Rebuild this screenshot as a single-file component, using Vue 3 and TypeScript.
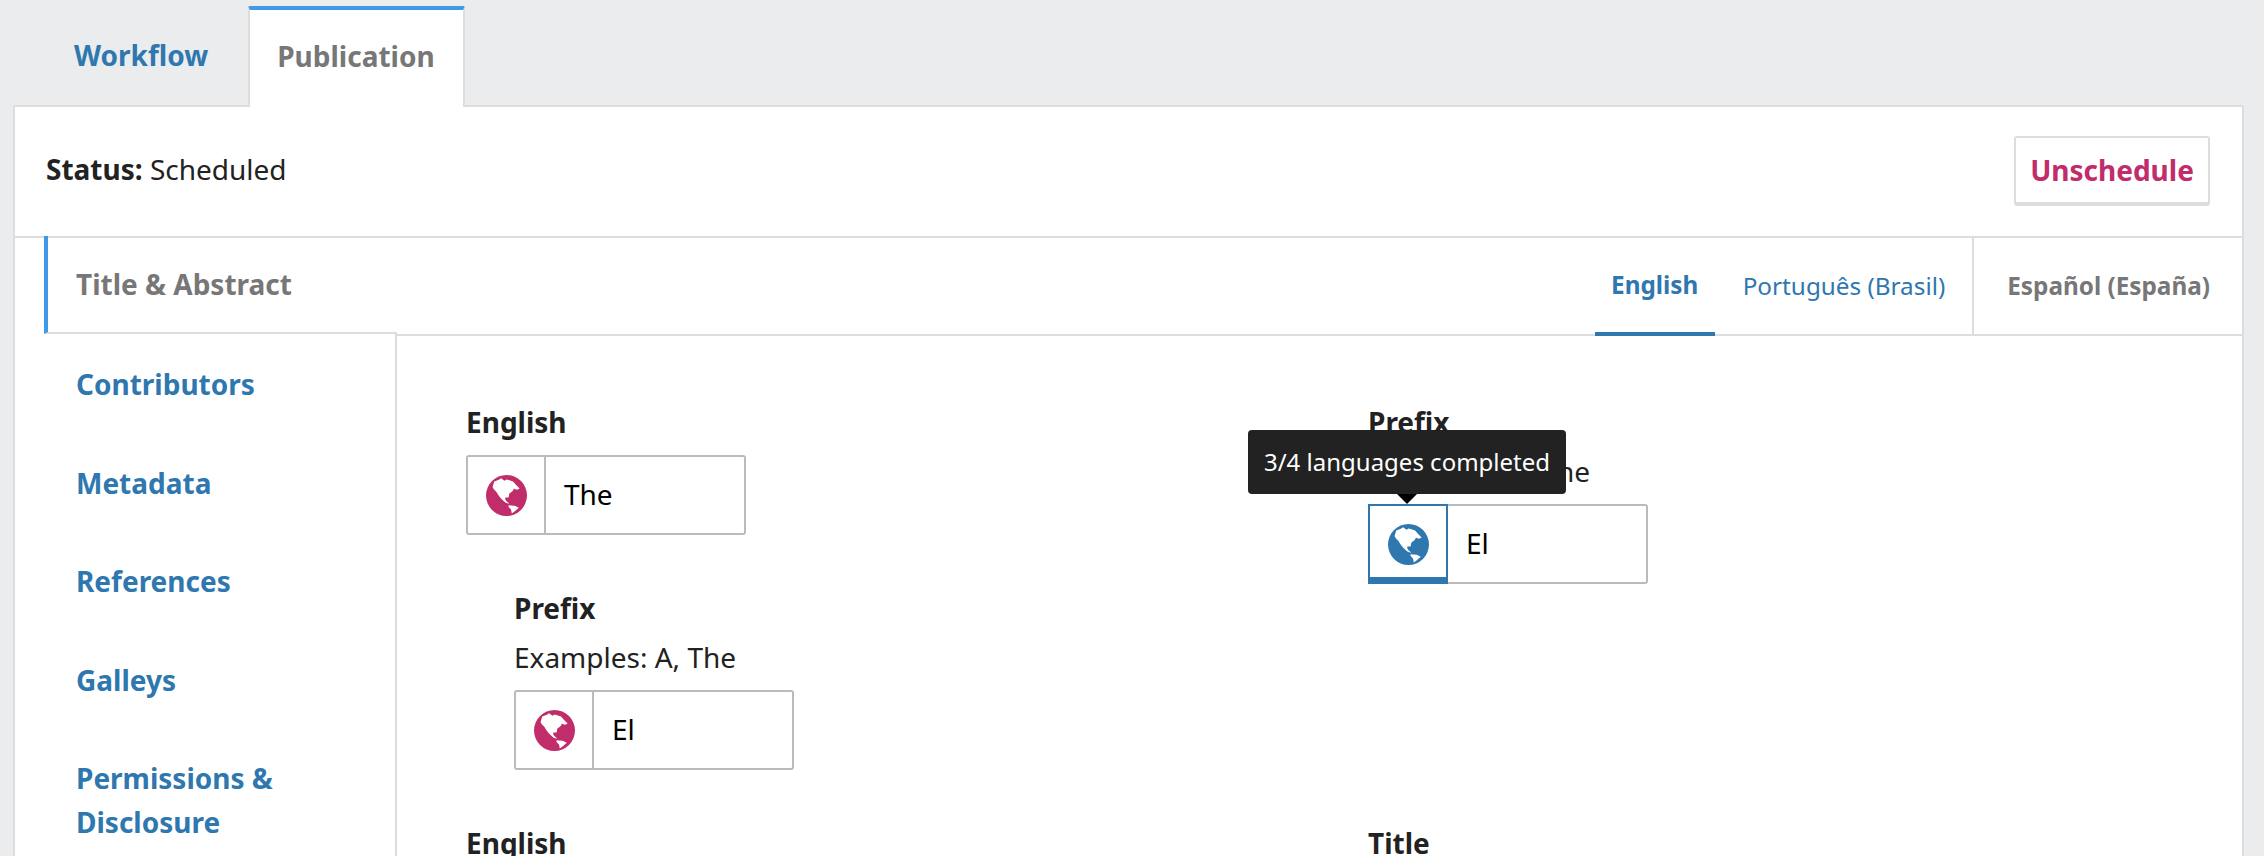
<script setup lang="ts">
const navItems: string[] = ['Contributors', 'Metadata', 'References', 'Galleys', 'Permissions & Disclosure']
const globePath =
  'M50 0a50 50 0 1 0 0 100a50 50 0 1 0 0-100z' +
  'M16 29L20 16L30 12L37 8L45 14L50 11L55 12L66 16L74 25L82 33L76 36L71 35L68 33L66 38L63 41L57 45L56 50L55 55L47 55L47 59L49 63L57 70L49 68L45 65L39 60L34 54L30 49L25 41L19 35z' +
  'M55 74L70 75L80 80L71 88L63 94L61 84L55 78z'
</script>

<template>
  <div class="page">
    <nav class="tabs">
      <a class="tab">Workflow</a>
      <a class="tab active">Publication</a>
    </nav>
    <section class="panel">
      <header class="status">
        <div class="status-text"><strong>Status:</strong> Scheduled</div>
        <button class="btn">Unschedule</button>
      </header>
      <div class="body">
        <aside class="side">
          <div class="side-active">Title &amp; Abstract</div>
          <ul class="side-list">
            <li v-for="item in navItems" :key="item">{{ item }}</li>
          </ul>
        </aside>
        <main class="main">
          <div class="locales">
            <div class="locale-group">
              <a class="locale current">English</a>
              <a class="locale">Português (Brasil)</a>
            </div>
            <a class="locale-extra">Español (España)</a>
          </div>
          <div class="form">
            <div class="cell">
              <div class="label">English</div>
              <div class="input">
                <span class="icon"><svg class="globe" viewBox="0 0 100 100"><path fill-rule="evenodd" :d="globePath" /></svg></span>
                <span class="value">The</span>
              </div>
              <div class="nested">
                <div class="label">Prefix</div>
                <div class="hint">Examples: A, The</div>
                <div class="input">
                  <span class="icon"><svg class="globe" viewBox="0 0 100 100"><path fill-rule="evenodd" :d="globePath" /></svg></span>
                  <span class="value">El</span>
                </div>
              </div>
            </div>
            <div class="cell">
              <div class="label">Prefix</div>
              <div class="hint">Examples: A, The</div>
              <div class="input">
                <span class="icon hovered"><svg class="globe" viewBox="0 0 100 100"><path fill-rule="evenodd" :d="globePath" /></svg></span>
                <span class="value">El</span>
                <div class="tooltip">3/4 languages completed</div>
              </div>
            </div>
            <div class="cell"><div class="label">English</div></div>
            <div class="cell"><div class="label">Title</div></div>
          </div>
        </main>
      </div>
    </section>
  </div>
</template>

<style>
html, body {
  margin: 0;
  background: #eaecee;
}
</style>

<style scoped>
.page {
  box-sizing: border-box;
  width: 2264px;
  height: 856px;
  overflow: hidden;
  padding: 6px 20px 0 13px;
  background: #eaecee;
  font-family: "Noto Sans", sans-serif;
  font-size: 28px;
  color: #222;
}
.tabs {
  display: flex;
  height: 101px;
  margin-bottom: -2px;
  padding-left: 31px;
  position: relative;
  z-index: 1;
}
.tab {
  display: flex;
  align-items: center;
  padding: 0 30px 4px;
  font-weight: 700;
  color: #2f77af;
}
.tab.active {
  box-sizing: border-box;
  width: 217px;
  margin-left: 10px;
  background: #fff;
  color: #777;
  border: 2px solid #ddd;
  border-top: 4px solid #3f9ae5;
  border-bottom: 0;
  border-radius: 2px 2px 0 0;
  padding: 0 0 6px 27px;
}
.panel {
  box-sizing: border-box;
  height: 760px;
  background: #fff;
  border: 2px solid #ddd;
  border-radius: 2px;
}
.status {
  box-sizing: border-box;
  height: 131px;
  display: flex;
  align-items: center;
  justify-content: space-between;
  padding: 0 32px 0 31px;
  border-bottom: 2px solid #ddd;
}
.status-text {
  padding-bottom: 6px;
}
.btn {
  box-sizing: border-box;
  width: 196px;
  height: 70px;
  margin-bottom: 1px;
  background: #fff;
  border: 2px solid #ddd;
  border-bottom-width: 4px;
  border-radius: 3px;
  font-family: inherit;
  font-weight: 700;
  font-size: 28px;
  color: #c12c6a;
  padding: 0 0 1px;
}
.body {
  display: flex;
}
.side {
  flex: none;
  width: 382px;
  box-sizing: border-box;
  padding-left: 29px;
}
.side-active {
  box-sizing: border-box;
  height: 98px;
  margin-top: -2px;
  display: flex;
  align-items: center;
  padding: 0 0 1px 28px;
  border-left: 4px solid #3f9ae5;
  border-bottom: 2px solid #ddd;
  font-weight: 700;
  color: #777;
}
.side-list {
  list-style: none;
  margin: 0;
  padding: 1px 0 0 32px;
  border-right: 2px solid #ddd;
  height: 560px;
  font-weight: 700;
  line-height: 44px;
  color: #2f77af;
}
.side-list li {
  padding: 27.25px 40px 27.25px 0;
}
.main {
  flex: 1;
  min-width: 0;
}
.locales {
  box-sizing: border-box;
  height: 98px;
  display: flex;
  justify-content: flex-end;
  border-bottom: 2px solid #ddd;
  font-size: 24.3px;
}
.locale-group {
  display: flex;
  padding-right: 27px;
  border-right: 2px solid #ddd;
}
.locale {
  display: flex;
  align-items: center;
  color: #2f77af;
  padding: 0 0 2px 28px;
}
.locale.current {
  width: 120px;
  box-sizing: border-box;
  padding: 0 0 1px;
  justify-content: center;
  font-weight: 700;
  border-bottom: 4px solid #2f77af;
  margin-bottom: -2px;
}
.locale-extra {
  display: flex;
  align-items: center;
  padding: 0 32px 2px 33px;
  font-weight: 700;
  color: #777;
}
.form {
  display: grid;
  grid-template-columns: 902px 1fr;
  row-gap: 51px;
  padding: 64px 0 0 69px;
}
.label {
  font-weight: 700;
  line-height: 44px;
}
.hint {
  margin-top: 5px;
  line-height: 44px;
}
.input {
  box-sizing: border-box;
  position: relative;
  display: flex;
  width: 280px;
  height: 80px;
  margin-top: 11px;
  border: 2px solid #bbb;
  border-radius: 3px;
  color: #000;
}
.icon {
  flex: none;
  box-sizing: border-box;
  width: 78px;
  display: flex;
  align-items: center;
  justify-content: center;
  border-right: 2px solid #bbb;
  color: #c12c6a;
}
.icon.hovered {
  width: 80px;
  margin: -2px 0 -2px -2px;
  border: 2px solid #2f77af;
  border-bottom-width: 7px;
  color: #2f77af;
  padding-top: 5px;
}
.globe {
  width: 41px;
  height: 41px;
  fill: currentColor;
}
.value {
  display: flex;
  align-items: center;
  padding: 0 0 2px 18px;
}
.nested {
  margin: 51px 0 0 48px;
}
.tooltip {
  position: absolute;
  left: -122px;
  top: -76px;
  box-sizing: border-box;
  width: 318px;
  height: 64px;
  display: flex;
  align-items: center;
  justify-content: center;
  padding-bottom: 2px;
  background: #222;
  border-radius: 4px;
  color: #fff;
  font-size: 24px;
  white-space: nowrap;
}
.tooltip::after {
  content: "";
  position: absolute;
  left: 149px;
  bottom: -10px;
  border-style: solid;
  border-width: 10px 10px 0;
  border-color: #000 transparent transparent;
}
</style>
